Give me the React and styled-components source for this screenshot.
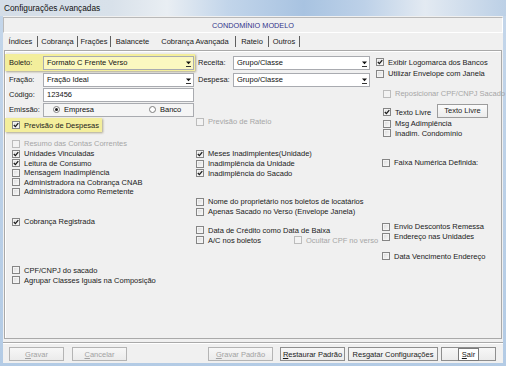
import React from "react";
import styled, { createGlobalStyle } from "styled-components";

const GlobalStyle = createGlobalStyle`
  html, body { margin: 0; padding: 0; background: #fff; }
  body { font-family: "Liberation Sans", Arial, sans-serif; }
`;

const Window = styled.div`
  width: 506px;
  height: 366px;
  display: flex;
  flex-direction: column;
  background: linear-gradient(180deg, #c4d6ea 0%, #b3cbe5 100%);
  overflow: hidden;
`;

const TitleBar = styled.div`
  height: 16px;
  flex: none;
  display: flex;
  align-items: center;
  padding-left: 4px;
  font-size: 8.3px;
  color: #111;
  background: linear-gradient(
    90deg,
    #d4dde7 0%,
    #d8e1ea 22%,
    #e9eef3 33%,
    #c2d5ea 45%,
    #a8c3e1 60%,
    #bdd1e8 72%,
    #e3eaf2 84%,
    #bcd0e6 100%
  );
`;

const Client = styled.div`
  flex: 1;
  margin: 0 3px 3px;
  background: #f0f0f0;
  display: flex;
  flex-direction: column;
`;

const Header = styled.div`
  margin-top: 1px;
  height: 16px;
  box-sizing: border-box;
  border: 1px solid #b9b9b9;
  border-right-color: #fff;
  border-bottom-color: #fff;
  display: flex;
  align-items: center;
  justify-content: center;
  font-size: 7.3px;
  color: #33338a;
`;

const TabStrip = styled.div`
  height: 17px;
  display: flex;
  align-items: center;
  padding-left: 1px;
`;

const Tab = styled.div`
  width: ${(p) => p.$w}px;
  height: 11px;
  box-sizing: border-box;
  display: flex;
  align-items: center;
  justify-content: center;
  font-size: 7.5px;
  color: #1a1a1a;
  border-right: 1px solid ${(p) => (p.$sep ? "#5f5f5f" : "transparent")};
`;

const TabPanel = styled.div`
  height: 289px;
  box-sizing: border-box;
  margin: 0 1px;
  border: 1px solid #a9a9a9;
  box-shadow: inset 1px 1px 0 #fff;
  display: grid;
  grid-template-columns: 190px 177px 1fr;
  align-items: start;
`;

const Column = styled.div`
  display: flex;
  flex-direction: column;
`;

const FieldRow = styled.div`
  display: flex;
  align-items: center;
  height: ${(p) => p.$h || 15}px;
  margin-top: ${(p) => p.$mt || 0}px;
  font-size: 7.5px;
  color: #1a1a1a;
`;

const Highlight = styled(FieldRow)`
  width: ${(p) => p.$w}px;
  background: #f3ee9c;
  box-shadow: 1px 1px 2px rgba(90, 80, 20, 0.45);
  padding-left: ${(p) => p.$pl || 0}px;
  box-sizing: border-box;
`;

const Label = styled.span`
  width: 38px;
  flex: none;
  box-sizing: border-box;
  padding-left: ${(p) => p.$pl}px;
`;

const Field = styled.div`
  width: ${(p) => p.$w}px;
  height: 14px;
  box-sizing: border-box;
  border: 1px solid #a9abb0;
  background: ${(p) => p.$bg || "#fff"};
  display: flex;
  align-items: center;
  padding-left: 3px;
  font-size: 7.5px;
  color: #111;
`;

const FieldText = styled.span`
  flex: 1;
`;

const DropBtn = styled.span`
  width: 9px;
  height: 100%;
  display: flex;
  align-items: center;
  justify-content: center;
`;

const RadioItem = styled.span`
  display: flex;
  align-items: center;
  gap: 4px;
  width: ${(p) => p.$w}px;
`;

const RadioDot = styled.span`
  width: 7px;
  height: 7px;
  box-sizing: border-box;
  border-radius: 50%;
  border: 1px solid #7d7d7d;
  background: #fff;
  display: flex;
  align-items: center;
  justify-content: center;
  &::after {
    content: "";
    width: 3px;
    height: 3px;
    border-radius: 50%;
    background: ${(p) => (p.$on ? "#1c1c1c" : "transparent")};
  }
`;

const CheckRow = styled.div`
  display: flex;
  align-items: center;
  gap: 4px;
  height: 9.6px;
  width: ${(p) => (p.$w ? `${p.$w}px` : "auto")};
  flex: none;
  margin-top: ${(p) => p.$mt || 0}px;
  padding-left: ${(p) => p.$indent || 0}px;
  box-sizing: border-box;
  font-size: 7.5px;
  white-space: nowrap;
  color: ${(p) => (p.$disabled ? "#a6a6a6" : "#1a1a1a")};
`;

const Box = styled.span`
  width: 8px;
  height: 8px;
  flex: none;
  box-sizing: border-box;
  border: 1px solid ${(p) => (p.$disabled ? "#bcbcbc" : "#858585")};
  background: ${(p) =>
    p.$disabled ? "#f3f3f3" : "linear-gradient(135deg, #d9d9d9 0%, #fbfbfb 100%)"};
  box-shadow: inset 0 0 0 1px ${(p) => (p.$disabled ? "#f3f3f3" : "#f4f4f4")};
  display: flex;
  align-items: center;
  justify-content: center;
`;

const InlineRow = styled.div`
  display: flex;
  align-items: flex-start;
  margin-top: ${(p) => p.$mt || 0}px;
  height: ${(p) => p.$h || 9.6}px;
`;

const SmallButton = styled.div`
  width: 51px;
  height: 14px;
  box-sizing: border-box;
  border: 1px solid #9c9c9c;
  background: linear-gradient(#fbfbfb, #ececec);
  display: flex;
  align-items: center;
  justify-content: center;
  font-size: 7.5px;
  color: #1a1a1a;
`;

const ButtonBar = styled.div`
  margin-top: 3px;
  border-top: 1px solid #a9a9a9;
  box-shadow: inset 0 1px 0 #fff;
  flex: 1;
  display: flex;
  align-items: flex-start;
  padding-top: 4px;
`;

const Button = styled.div`
  width: ${(p) => p.$w}px;
  height: 14px;
  margin-left: ${(p) => p.$ml}px;
  box-sizing: border-box;
  border: 1px solid ${(p) => (p.$disabled ? "#b4b4b4" : "#8e8e8e")};
  background: linear-gradient(#f7f7f7, #ebebeb);
  display: flex;
  align-items: center;
  justify-content: center;
  font-size: 7.5px;
  color: ${(p) => (p.$disabled ? "#a2a2a2" : "#1a1a1a")};
`;

const Focus = styled.span`
  outline: 1px solid #7a7a7a;
  padding: 1px 3px;
  background: #fff;
`;

function Arrow() {
  return (
    <DropBtn>
      <svg width="7" height="8" viewBox="0 0 7 8">
        <path d="M1 2.5 L6 2.5 L3.5 5.2 Z" fill="#111" />
        <path d="M1 7.5 L6 7.5" stroke="#333" strokeWidth="1" />
      </svg>
    </DropBtn>
  );
}

function Combo({ w, value, bg }) {
  return (
    <Field $w={w} $bg={bg}>
      <FieldText>{value}</FieldText>
      <Arrow />
    </Field>
  );
}

function Check({ label, checked, disabled, indent, mt, w }) {
  return (
    <CheckRow $indent={indent} $mt={mt} $disabled={disabled} $w={w}>
      <Box $disabled={disabled}>
        {checked && (
          <svg width="6" height="6" viewBox="0 0 6 6">
            <path d="M0.8 3 L2.4 4.6 L5.3 1.2" fill="none" stroke="#1b1b1b" strokeWidth="1.3" />
          </svg>
        )}
      </Box>
      <span>{label}</span>
    </CheckRow>
  );
}

const tabs = [
  { name: "Índices", w: 34, sep: true },
  { name: "Cobrança", w: 40, sep: true },
  { name: "Frações", w: 33, sep: true },
  { name: "Balancete", w: 44, sep: false },
  { name: "Cobrança Avançada", w: 81, sep: true },
  { name: "Rateio", w: 33, sep: true },
  { name: "Outros", w: 31, sep: true },
];

export default function App() {
  return (
    <>
      <GlobalStyle />
      <Window>
        <TitleBar>Configurações Avançadas</TitleBar>
        <Client>
          <Header>CONDOMÍNIO MODELO</Header>
          <TabStrip>
            {tabs.map((t) => (
              <Tab key={t.name} $w={t.w} $sep={t.sep}>
                {t.name}
              </Tab>
            ))}
          </TabStrip>
          <TabPanel>
            <Column>
              <Highlight $w={190} $h={17} $mt={3}>
                <Label $pl={4}>Boleto:</Label>
                <Combo w={151} value="Formato C Frente Verso" bg="#fbf8c0" />
              </Highlight>
              <FieldRow $mt={1}>
                <Label $pl={4}>Fração:</Label>
                <Combo w={151} value="Fração Ideal" />
              </FieldRow>
              <FieldRow>
                <Label $pl={4}>Código:</Label>
                <Field $w={151}>123456</Field>
              </FieldRow>
              <FieldRow>
                <Label $pl={4}>Emissão:</Label>
                <Field $w={151} $bg="#f5f5f5">
                  <RadioItem $w={96} style={{ paddingLeft: 6 }}>
                    <RadioDot $on />
                    Empresa
                  </RadioItem>
                  <RadioItem>
                    <RadioDot />
                    Banco
                  </RadioItem>
                </Field>
              </FieldRow>
              <Highlight $w={97} $h={14} $mt={1} $pl={7}>
                <Check label="Previsão de Despesas" checked />
              </Highlight>
              <Check label="Resumo das Contas Correntes" disabled indent={7} mt={7.2} />
              <Check label="Unidades Vinculadas" checked indent={7} />
              <Check label="Leitura de Consumo" checked indent={7} />
              <Check label="Mensagem Inadimplência" indent={7} />
              <Check label="Administradora na Cobrança CNAB" indent={7} />
              <Check label="Administradora como Remetente" indent={7} />
              <Check label="Cobrança Registrada" checked indent={7} mt={20.4} />
              <Check label="CPF/CNPJ do sacado" indent={7} mt={38.9} />
              <Check label="Agrupar Classes Iguais na Composição" indent={7} />
            </Column>

            <Column>
              <FieldRow $mt={4}>
                <Label $pl={3}>Receita:</Label>
                <Combo w={137} value="Grupo/Classe" />
              </FieldRow>
              <FieldRow $mt={2}>
                <Label $pl={3}>Despesa:</Label>
                <Combo w={137} value="Grupo/Classe" />
              </FieldRow>
              <Check label="Previsão de Rateio" disabled indent={1} mt={30.2} />
              <Check label="Meses Inadimplentes(Unidade)" checked indent={1} mt={22.4} />
              <Check label="Inadimplência da Unidade" indent={1} />
              <Check label="Inadimplência do Sacado" checked indent={1} />
              <Check label="Nome do proprietário nos boletos de locatários" indent={1} mt={19.2} />
              <Check label="Apenas Sacado no Verso (Envelope Janela)" indent={1} />
              <Check label="Data de Crédito como Data de Baixa" indent={1} mt={9.3} />
              <InlineRow>
                <Check label="A/C nos boletos" indent={1} w={99} />
                <Check label="Ocultar CPF no verso" disabled />
              </InlineRow>
            </Column>

            <Column>
              <Check label="Exibir Logomarca dos Bancos" checked indent={4} mt={6.7} />
              <Check label="Utilizar Envelope com Janela" indent={4} mt={1.9} />
              <Check label="Reposicionar CPF/CNPJ Sacado" disabled indent={11} mt={10.4} />
              <InlineRow $mt={5.2} $h={15}>
                <CheckRow $w={65} $indent={11} $mt={3.5}>
                  <Box>
                    <svg width="6" height="6" viewBox="0 0 6 6">
                      <path d="M0.8 3 L2.4 4.6 L5.3 1.2" fill="none" stroke="#1b1b1b" strokeWidth="1.3" />
                    </svg>
                  </Box>
                  <span>Texto Livre</span>
                </CheckRow>
                <SmallButton>Texto Livre</SmallButton>
              </InlineRow>
              <Check label="Msg Adimplência" indent={11} />
              <Check label="Inadim. Condomínio" indent={11} />
              <Check label="Faixa Numérica Definida:" indent={10} mt={20} />
              <Check label="Envio Descontos Remessa" indent={10} mt={54.4} />
              <Check label="Endereço nas Unidades" indent={10} />
              <Check label="Data Vencimento Endereço" indent={10} mt={10.3} />
            </Column>
          </TabPanel>
          <ButtonBar>
            <Button $w={55} $ml={6} $disabled>
              <span><u>G</u>ravar</span>
            </Button>
            <Button $w={55} $ml={8} $disabled>
              <span><u>C</u>ancelar</span>
            </Button>
            <Button $w={65} $ml={81} $disabled>
              <span><u>G</u>ravar Padrão</span>
            </Button>
            <Button $w={65} $ml={7}>
              <span><u>R</u>estaurar Padrão</span>
            </Button>
            <Button $w={90} $ml={3}>
              <span>Resgatar Configurações</span>
            </Button>
            <Button $w={55} $ml={3}>
              <Focus><u>S</u>air</Focus>
            </Button>
          </ButtonBar>
        </Client>
      </Window>
    </>
  );
}
